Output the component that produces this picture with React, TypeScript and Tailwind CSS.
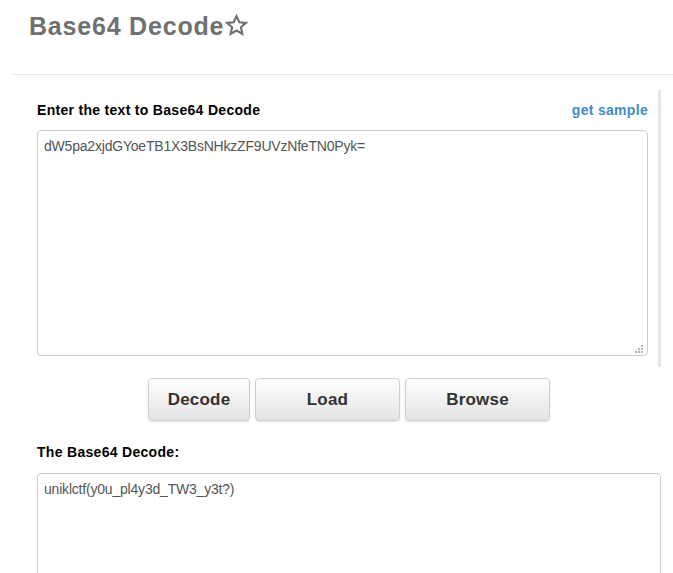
import React from "react";

function Grip() {
  return (
    <svg
      width="8"
      height="8"
      viewBox="0 0 8 8"
      className="absolute right-[4px] bottom-[2px]"
    >
      <rect x="6" y="0" width="2" height="2" fill="#b5b5b5" />
      <rect x="3" y="3" width="2" height="2" fill="#b5b5b5" />
      <rect x="6" y="3" width="2" height="2" fill="#b5b5b5" />
      <rect x="0" y="6" width="2" height="2" fill="#b5b5b5" />
      <rect x="3" y="6" width="2" height="2" fill="#b5b5b5" />
      <rect x="6" y="6" width="2" height="2" fill="#b5b5b5" />
    </svg>
  );
}

function Star() {
  return (
    <svg
      width="23"
      height="23"
      viewBox="0 0 24 24"
      className="ml-[1px] mt-[-1px]"
      fill="none"
      stroke="#707070"
      strokeWidth="2.2"
      strokeLinejoin="miter"
    >
      <polygon points="12,2.2 14.9,8.6 21.8,9.3 16.6,13.9 18.1,20.8 12,17.3 5.9,20.8 7.4,13.9 2.2,9.3 9.1,8.6" />
    </svg>
  );
}

function Button({ label, width }: { label: string; width: string }) {
  return (
    <button
      className={`${width} h-[43px] flex items-center justify-center rounded-[4px] border border-[#cfcfcf] bg-linear-to-b from-[#fefefe] to-[#e4e4e4] shadow-[0_1px_2px_rgba(0,0,0,0.12)] text-[17px] font-bold tracking-[0.2px] text-[#333]`}
    >
      {label}
    </button>
  );
}

export default function App() {
  return (
    <div
      className="w-[673px] h-[573px] overflow-hidden bg-white"
      style={{ fontFamily: '"Liberation Sans", Arial, sans-serif' }}
    >
      <div className="pl-[29px] pt-[11px] flex items-center">
        <h1 className="text-[25px] leading-[30px] font-bold tracking-[0.8px] text-[#707070]">
          Base64 Decode
        </h1>
        <Star />
      </div>

      <div className="ml-[12px] mt-[33px] border-t border-[#e6e6e6]" />

      <div className="ml-[37px] w-[624px] mt-[15px] pt-[10px] pb-[11px] pr-[10px] border-r-[3px] border-[#e6e6e6]">
        <div className="flex items-baseline justify-between h-[20px] leading-[20px]">
          <span className="text-[14px] font-bold tracking-[0.3px] text-[#000]">
            Enter the text to Base64 Decode
          </span>
          <span className="text-[14px] font-bold tracking-[0.3px] text-[#428bca]">
            get sample
          </span>
        </div>
        <div className="relative mt-[10px] h-[226px] rounded-[4px] border border-[#cccccc] px-[6px] pt-[5px] text-[14px] leading-[20px] tracking-[-0.2px] text-[#555]">
          dW5pa2xjdGYoeTB1X3BsNHkzZF9UVzNfeTN0Pyk=
          <Grip />
        </div>
      </div>

      <div className="ml-[37px] w-[624px] mt-[11px] flex justify-center gap-[5px]">
        <Button label="Decode" width="w-[102px]" />
        <Button label="Load" width="w-[145px]" />
        <Button label="Browse" width="w-[145px]" />
      </div>

      <div className="ml-[37px] w-[624px] mt-[21px]">
        <div className="h-[20px] leading-[20px] text-[14px] font-bold tracking-[0.3px] text-[#000]">
          The Base64 Decode:
        </div>
        <div className="mt-[11px] h-[200px] rounded-[4px] border border-[#cccccc] px-[6px] pt-[5px] text-[14px] leading-[20px] tracking-[-0.2px] text-[#555]">
          uniklctf(y0u_pl4y3d_TW3_y3t?)
        </div>
      </div>
    </div>
  );
}
